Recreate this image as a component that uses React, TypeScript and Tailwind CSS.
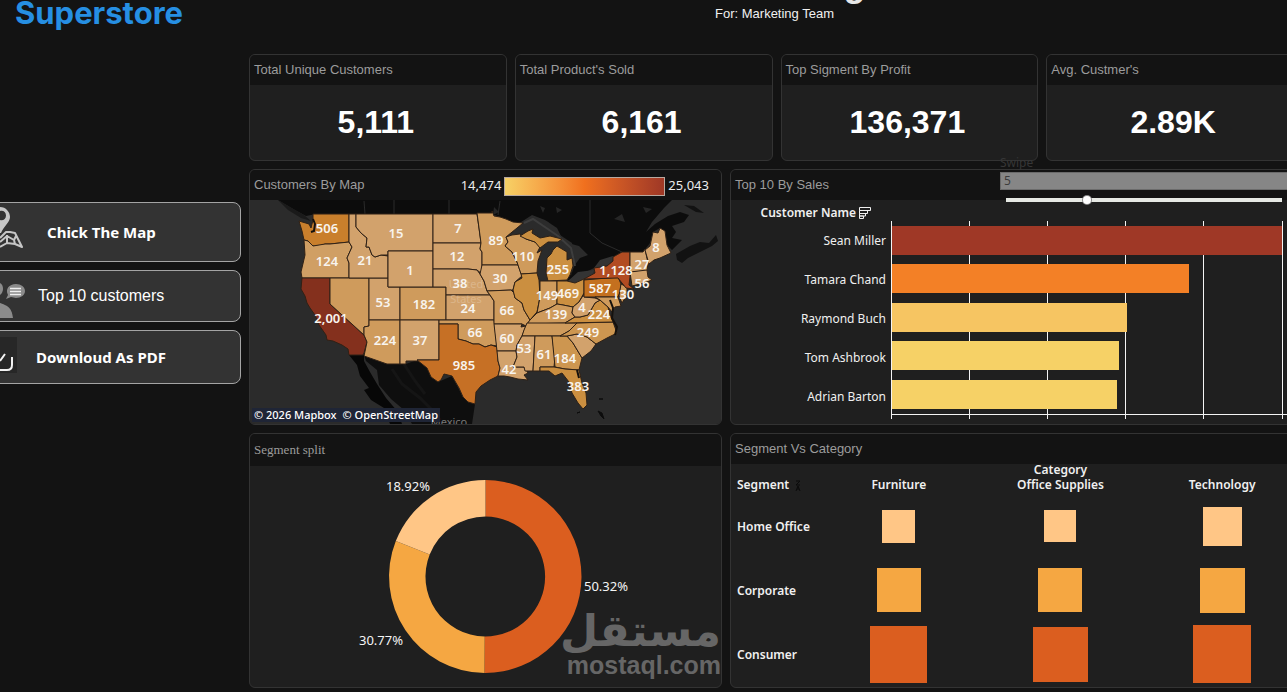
import type { ReactNode } from 'react';
import { useState } from 'react';

const SANS = "font-['Liberation_Sans',Arial,sans-serif]";

interface Kpi {
  label: string;
  value: string;
}

const KPIS: Kpi[] = [
  { label: 'Total Unique Customers', value: '5,111' },
  { label: "Total Product's Sold", value: '6,161' },
  { label: 'Top Sigment By Profit', value: '136,371' },
  { label: "Avg. Custmer's", value: '2.89K' },
];

const TOP_SALES = [
  { name: 'Sean Miller', width: 391, fill: '#9f3826' },
  { name: 'Tamara Chand', width: 298, fill: '#f38026' },
  { name: 'Raymond Buch', width: 236, fill: '#f6c562' },
  { name: 'Tom Ashbrook', width: 228, fill: '#f6d166' },
  { name: 'Adrian Barton', width: 226, fill: '#f6d166' },
];

const CATEGORIES = ['Furniture', 'Office Supplies', 'Technology'];

const SEGMENTS = [
  { name: 'Home Office', color: '#ffc686', sizes: [33, 32, 39] },
  { name: 'Corporate', color: '#f5a742', sizes: [44, 44, 45] },
  { name: 'Consumer', color: '#db5e1f', sizes: [57, 55, 58] },
];

const TAN = '#d2a26c';
const SAND = '#cf9b5c';
const GOLD = '#cb8f40';

/** State outlines: path + fill. */
const STATES: [string, string][] = [
  // west
  ['M313 214L349 214L349 242L330 244L325 244L320 246L313 246L308 241L304 240L302 231L299 221L309 224L311 228L313 220Z', '#c97f2c'],
  ['M304 240L308 241L313 246L325 244L330 244L349 242L352 247L347 258L349 263L349 278L302 278L301 272L305 255Z', '#d09f64'],
  ['M302 278L330 278L330 304L364 335L367 342L364 353L363 355L349 355L348 349L342 345L333 341L327 340L326 335L319 325L315 315L310 308L307 303L305 296L301 289Z', '#84301d'],
  ['M330 278L369 278L369 326L364 327L364 335L330 304Z', SAND],
  ['M369 278L388 278L388 287L400 287L400 320L369 320Z', TAN],
  ['M400 287L446 287L446 320L400 320Z', SAND],
  ['M369 320L400 320L400 364L387 364L364 356L367 342L364 335L364 327L369 326Z', SAND],
  ['M400 320L439 320L439 360L417 360L418 361L406 361L406 364L400 364Z', TAN],
  ['M349 214L356 214L356 227L361 233L367 238L366 247L369 247L372 255L375 257L381 255L388 256L388 278L349 278L349 263L347 258L352 247L349 242Z', TAN],
  ['M356 214L433 214L433 251L388 251L388 255L381 255L375 257L372 255L369 247L366 247L367 238L361 233L356 227Z', TAN],
  ['M388 251L433 251L433 287L388 287Z', TAN],
  // plains
  ['M433 214L477 214L479 228L481 243L433 243Z', TAN],
  ['M433 243L481 243L480 249L482 252L482 274L477 270L468 269L433 269Z', TAN],
  ['M433 269L468 269L477 270L480 274L484 281L487 291L490 295L446 295L446 287L433 287Z', TAN],
  ['M446 295L490 295L494 301L494 320L446 320Z', TAN],
  ['M439 320L494 320L497 346L491 345L485 347L479 344L473 344L466 341L458 339L458 324L439 324Z', SAND],
  ['M439 324L458 324L458 339L466 341L473 344L479 344L485 347L491 345L497 347L498 361L500 368L498 376L490 380L481 386L476 392L475 404L468 402L463 397L459 388L452 376L444 374L441 380L438 382L431 377L427 368L417 360L439 360Z', '#c67025'],
  ['M477 213L492 213L492 211L494 216L500 217L506 219L513 222L523 223L517 228L506 237L508 242L505 246L512 252L517 262L518 265L482 265L482 252L480 249L481 243Z', SAND],
  ['M482 265L518 265L522 276L515 282L513 290L487 291L484 281L480 274Z', TAN],
  ['M487 291L511 290L514 293L515 298L522 303L524 310L530 320L526 326L522 324L494 324L494 301L490 295Z', SAND],
  ['M494 324L522 324L521 327L526 326L522 336L517 345L516 351L497 351Z', TAN],
  ['M497 351L516 351L517 357L513 367L524 367L528 373L524 375L528 380L518 379L510 377L504 376L498 376L500 368L498 361Z', TAN],
  // great lakes
  ['M506 237L512 235L520 234L526 239L535 242L540 247L537 253L542 250L538 261L537 273L521 274L517 262L512 252L505 246L508 242Z', SAND],
  ['M520 236L528 231L533 229L532 233L540 238L550 236L562 239L558 242L548 242L540 248L535 242L526 239Z', GOLD],
  ['M557 246L562 249L567 252L567 260L572 258L573 266L570 275L567 280L548 281L546 273L547 258L551 254L553 250Z', GOLD],
  ['M521 274L537 273L539 280L540 297L537 312L530 320L524 310L522 303L515 298L513 290L515 282L522 278Z', GOLD],
  ['M540 281L557 281L557 304L550 308L537 313L540 297Z', SAND],
  ['M557 281L567 281L575 283L584 279L584 293L579 302L573 307L563 305L557 304Z', GOLD],
  // south
  ['M537 313L550 308L557 304L563 305L573 307L572 313L575 317L565 323L527 324L530 320Z', SAND],
  ['M527 323L577 323L569 331L560 336L522 336L524 330Z', SAND],
  ['M522 336L535 336L533 371L525 371L524 367L513 367L517 357L516 351L517 345Z', TAN],
  ['M535 336L552 336L555 357L554 367L540 367L540 371L533 371Z', SAND],
  ['M552 336L567 336L573 343L582 358L579 370L565 369L555 367Z', '#cd9650'],
  ['M540 367L554 367L565 369L579 370L582 383L586 393L587 405L583 409L578 403L572 393L569 382L562 373L555 376L549 371L540 371Z', GOLD],
  ['M567 336L577 334L587 337L596 344L591 351L582 358L573 343Z', TAN],
  ['M577 323L613 322L617 333L607 338L596 344L587 337L577 334L567 336L560 336L569 331Z', '#cd9650'],
  ['M565 323L575 317L580 317L588 315L595 303L600 300L608 307L610 315L613 322Z', GOLD],
  ['M573 307L579 302L584 294L584 297L595 298L600 300L595 303L588 315L580 317L575 317L572 313Z', TAN],
  // north east
  ['M584 280L618 277L621 284L620 292L618 297L584 297Z', '#c4701f'],
  ['M595 297L618 297L621 306L615 307L612 312L608 307L600 300Z', SAND],
  ['M621 284L627 287L627 295L622 303L619 296Z', SAND],
  ['M584 279L595 273L594 268L607 266L613 261L613 257L622 252L630 252L630 277L629 285L634 289L626 288L618 278Z', '#b24c22'],
  ['M630 252L643 252L645 249L648 263L647 271L630 272Z', TAN],
  ['M630 272L647 270L648 277L652 280L644 283L632 286Z', TAN],
  ['M645 250L650 246L653 232L658 233L660 228L665 231L667 245L671 253L660 258L654 260L649 264Z', TAN],
];

const MAP_LABELS: [number, number, string][] = [
  [327, 229, '506'], [396, 234, '15'], [458, 229, '7'], [496, 241, '89'], [327, 262, '124'],
  [365, 261, '21'], [410, 271, '1'], [457, 257, '12'], [523, 257, '110'], [460, 284, '38'],
  [500, 279, '30'], [558, 270, '255'], [616, 271, '1,128'], [642, 265, '27'], [656, 248, '8'],
  [642, 284, '56'], [600, 289, '587'], [568, 294, '469'], [547, 296, '149'], [623, 295, '130'],
  [383, 303, '53'], [424, 305, '182'], [468, 309, '24'], [507, 311, '66'], [582, 308, '4'],
  [556, 315, '139'], [599, 315, '224'], [331, 319, '2,001'], [385, 341, '224'], [420, 341, '37'],
  [475, 333, '66'], [507, 339, '60'], [588, 333, '249'], [524, 349, '53'], [544, 355, '61'],
  [565, 359, '184'], [464, 366, '985'], [509, 370, '42'], [578, 387, '383'],
];

interface PanelProps {
  title: string;
  serif?: boolean;
  headerClass?: string;
  extra?: ReactNode;
  children: ReactNode;
}

function Panel({ title, serif, headerClass = 'h-[30px]', extra, children }: PanelProps) {
  return (
    <section className="relative flex min-w-0 flex-col overflow-hidden rounded-md border border-[#333333] bg-[#1f1f1f]">
      <header className={`flex shrink-0 items-center justify-between bg-[#131313] px-1 ${headerClass}`}>
        <h2
          className={`whitespace-nowrap text-[13px] text-[#9c9c9c] ${
            serif ? "font-['Liberation_Serif',serif]" : SANS
          }`}
        >
          {title}
        </h2>
        {extra}
      </header>
      {children}
    </section>
  );
}

function MapPinIcon() {
  return (
    <svg width="24" height="50" viewBox="0 0 24 50" className="shrink-0" aria-hidden="true">
      <path fillRule="evenodd" d="M0 0C6 0 10 5 10 10C10 15 4 19 1 26L0 26ZM0 4C3 3 6 5 6 8.500C6 12 3 14 0 13Z" fill="#c6c6c6" />
      <path d="M0 31L6 25H10L15 26L18 32L22 40L15 37L7 36L0 40M7 28V36M7 29L14 33L16 29M14 33L15 37M0 35L7 29" fill="none" stroke="#c6c6c6" strokeWidth="2" strokeLinejoin="round" />
    </svg>
  );
}

function CustomerIcon() {
  return (
    <svg width="25" height="44" viewBox="0 0 25 44" className="shrink-0" aria-hidden="true">
      <path d="M0 9C4 11 4 18 0 21Z" fill="#8b8b8b" />
      <path d="M0 29C5 31 12 32 13 44L0 44Z" fill="#8b8b8b" />
      <path d="M16 10C21 10 25 13 25 17C25 21 21 24 16 24L11 23L6 25L8 21C5 15 9 10 16 10Z" fill="#8b8b8b" />
      <path d="M10 14.500H21M10 17.500H21M10 20.500H21" stroke="#efefef" strokeWidth="1.500" />
    </svg>
  );
}

function DownloadIcon() {
  return (
    <svg width="17" height="36" viewBox="0 0 17 36" className="mt-1.5 shrink-0 self-start" aria-hidden="true">
      <rect width="17" height="36" fill="#272727" />
      <path d="M0 24L5 17M0 33H7Q12 33 12 28V20" fill="none" stroke="#f2f2f2" strokeWidth="2" />
    </svg>
  );
}

function Sidebar() {
  const item = '-ml-2 flex items-center rounded-lg border border-[#a4a4a4] bg-[#333333] pl-[7px] text-white';
  return (
    <nav className="flex w-[241px] shrink-0 flex-col gap-2">
      <a
        href="#top"
        className="-mt-3 mb-[164px] block h-[50px] pl-[15px] font-['Inter',sans-serif] text-[31px] font-bold leading-[50px] text-[#268fe3]"
      >
        Superstore
      </a>
      <button type="button" className={`${item} h-[60px] -mt-2 gap-[23px] font-['Noto_Sans','Open_Sans',sans-serif] text-[15px] font-bold`}>
        <MapPinIcon />
        Chick The Map
      </button>
      <button type="button" className={`${item} h-[52px] gap-[13px] ${SANS} text-base`}>
        <CustomerIcon />
        Top 10 customers
      </button>
      <button type="button" className={`${item} h-[54px] gap-[19px] font-['Noto_Sans','Open_Sans',sans-serif] text-[15px] font-bold`}>
        <DownloadIcon />
        Downloud As PDF
      </button>
    </nav>
  );
}

function KpiCard({ label, value }: Kpi) {
  return (
    <Panel title={label}>
      <p className={`flex h-[75px] items-center justify-center pr-1 pb-0.5 ${SANS} text-[32px] font-bold text-white`}>
        {value}
      </p>
    </Panel>
  );
}

function CustomerMap() {
  const legend = (
    <div className="flex items-center gap-[3px] pr-2 pt-0.5 text-[13px] text-[#ececec]">
      <span>14,474</span>
      <div className="h-[19px] w-[161px] border border-[#b8a9a0] bg-linear-to-r from-[#f6d166] via-[#f0701e] to-[#9f3826]" />
      <span>25,043</span>
    </div>
  );

  return (
    <Panel title="Customers By Map" extra={legend}>
      <svg viewBox="250 200 471 224" className="block w-full bg-[#2b2b2b]" role="img" aria-label="Customers by state">
        {/* Canada */}
        <path d="M278 200L672 200L664 208L652 222L646 232L655 224L668 216L680 212L689 215L684 222L672 226L676 232L672 238L682 240L672 250L667 245L665 231L660 228L653 232L650 243L643 252L622 252L613 257L600 262L594 268L580 275L567 281L576 262L572 243L560 235L548 222L532 216L520 226L500 217L492 214L316 214L306 216L295 210Z" fill="#0c0c0c" />
        <path d="M676 254L690 246L700 242L709 243L716 235L718 241L712 246L700 252L688 258L682 263L677 260Z" fill="#121212" />
        <path d="M684 205L694 206L704 213L696 212Z" fill="#121212" />
        <path d="M278 200L290 207L304 215L311 221L301 218L288 210Z" fill="#1a1a1a" />
        <path d="M364 201L365 214M394 200V214M449 200V214M590 200V233L602 243L622 252M500 201L498 215" fill="none" stroke="#2b2b2b" strokeWidth="1" />
        <path d="M540 206l5 2l-2 5zM614 219l8-5l3 8zM556 207l6 3l-5 3zM643 207l9 2l-6 4zM494 207l5 5l-6 3z" fill="#262626" />
        {/* Lakes */}
        <path d="M508 235L518 224L532 215L545 220L557 228L562 238L548 236L541 238L532 228L520 235Z" fill="#2b2b2b" />
        <path d="M538 262L541 252L548 244L556 243L549 250L546 262L547 274L543 281L538 278Z" fill="#2b2b2b" />
        <path d="M560 242L568 243L579 246L588 255L580 258L574 266L571 276L573 262L567 258L567 251Z" fill="#2b2b2b" />
        <path d="M568 281L578 272L594 270L592 276L580 282L570 284ZM594 268L600 260L613 256L612 262L604 267Z" fill="#343434" />
        <path d="M524 223L533 219L558 236L571 248L575 266" fill="none" stroke="#3d3d3d" strokeWidth="2" />
        {/* Mexico */}
        <path d="M349 355L364 355L364 361L370 372L377 384L386 398L398 412L402 424L390 424L384 408L371 400L364 390L369 388L360 376L357 365Z" fill="#070707" />
        <path d="M364 355L387 364L406 364L417 360L427 368L438 382L452 376L463 397L475 404L472 424L412 424L404 410L391 399L379 385L377 370L366 361Z" fill="#0e0e0e" />
        <path d="M392 369L402 384L420 398L436 414M404 364L415 381L425 394" fill="none" stroke="#151515" strokeWidth="3" />
        <path d="M598 411l4 2l2 6l-3-3zM577 413l3-1zM599 399l4 0z" fill="#0c0c0c" stroke="#0c0c0c" />

        <g stroke="#2f2116" strokeWidth="1" strokeLinejoin="round">
          {STATES.map(([d, fill]) => (
            <path key={d} d={d} fill={fill} />
          ))}
        </g>
        <path d="M313 219l2 5l-1 7l-3 1M610 300l3 8l-1 10l5 9l-2 8M577 370l2 8" fill="none" stroke="#15110d" strokeWidth="2" />

        <g className="font-['Noto_Sans','Open_Sans',sans-serif]" textAnchor="middle">
          <g fontSize="11" fill="#e2c29e">
            <text x="466" y="288" opacity="0.6">United</text>
            <text x="466" y="303" opacity="0.6">States</text>
          </g>
          <text x="449" y="426" fontSize="11" fill="#777777">Mexico</text>
          <g fontSize="13" fontWeight="600" fill="#f8f4ee">
            {MAP_LABELS.map(([x, y, label]) => (
              <text key={`${x}-${y}`} x={x} y={y + 4}>
                {label}
              </text>
            ))}
          </g>
        </g>
      </svg>
      <div className="absolute bottom-0.5 left-0.5 flex gap-1.5 bg-[#1f2536] px-0.5 text-[11px] font-medium leading-[14px] text-white">
        <a href="#mapbox">© 2026 Mapbox</a>
        <a href="#osm">© OpenStreetMap</a>
      </div>
    </Panel>
  );
}

function TopSales() {
  const [top, setTop] = useState(5);
  const ticks = [0, 1, 2, 3, 4, 5];

  return (
    <div className="relative flex">
      <div className="grid flex-1">
        <Panel title="Top 10 By Sales">
          <div className="flex flex-1">
            <div className="flex w-40 shrink-0 flex-col pr-[5px] pb-2 text-right text-[12px] text-[#f0f0f0]">
              <div className="flex h-[22px] items-center justify-end gap-[3px] pr-[15px] pt-1 font-semibold">
                <span>Customer Name</span>
                <svg width="12" height="12" viewBox="0 0 12 12" fill="none" stroke="#f0f0f0" aria-hidden="true">
                  <path d="M.5 .5H11.5V3.5H.5ZM.5 3.5H8.5V6.5H.5ZM.5 6.5H6.5V9H.5ZM.5 9H4.5V11.5H.5Z" />
                </svg>
              </div>
              {TOP_SALES.map((row) => (
                <span key={row.name} className="flex flex-1 items-center justify-end whitespace-nowrap">
                  {row.name}
                </span>
              ))}
            </div>
            <svg viewBox="0 0 412 224" className="block min-w-0 flex-1" role="img" aria-label="Sales by customer">
              {ticks.map((t) => (
                <rect key={t} x={Math.floor(t * 78.2)} y="21" width="1" height="198" fill="#f4f4f4" />
              ))}
              <rect x="0" y="214" width="412" height="1" fill="#f4f4f4" />
              {TOP_SALES.map((row, i) => (
                <rect key={row.name} x="1" y={Math.floor(26 + i * 38.5)} width={row.width - 1} height="29" fill={row.fill} />
              ))}
            </svg>
          </div>
        </Panel>
      </div>
      {/* Floating parameter control */}
      <div className="absolute -top-4 right-0 left-[270px] text-[12px]">
        <label htmlFor="swipe" className="block h-[19px] pt-0.5 leading-4 text-[#363636]">
          Swipe
        </label>
        <input
          type="text"
          aria-label="Swipe value"
          value={top}
          onChange={(e) => setTop(Number(e.target.value) || 1)}
          className="block h-[18px] w-full border border-[#6b6b6b] bg-[#868686] px-[3px] text-[12px] text-[#3c3c3c]"
        />
        <input
          id="swipe"
          type="range"
          min={1}
          max={15}
          value={top}
          onChange={(e) => setTop(Number(e.target.value))}
          className="ml-1.5 mt-[5px] block h-2.5 w-[276px] appearance-none bg-transparent [&::-webkit-slider-runnable-track]:h-1 [&::-webkit-slider-runnable-track]:bg-[#e6e9e4] [&::-webkit-slider-thumb]:-mt-0.5 [&::-webkit-slider-thumb]:size-2 [&::-webkit-slider-thumb]:appearance-none [&::-webkit-slider-thumb]:rounded-full [&::-webkit-slider-thumb]:bg-white [&::-webkit-slider-thumb]:ring-1 [&::-webkit-slider-thumb]:ring-[#8a8a8a]"
        />
      </div>
    </div>
  );
}

function SegmentSplit() {
  return (
    <Panel title="Segment split" serif headerClass="h-8">
      <svg viewBox="250 466 471 221" className="block w-full" role="img" aria-label="Segment split">
        <path d="M485.500 480A96.500 96.500 0 1 1 484.500 673L484.700 636.500A60 60 0 1 0 485.500 516.500Z" fill="#db5e1f" />
        <path d="M484.500 673A96.500 96.500 0 0 1 395.800 541L429.700 554.400A60 60 0 0 0 484.700 636.500Z" fill="#f5a742" />
        <path d="M395.800 541A96.500 96.500 0 0 1 485.500 480L485.500 516.500A60 60 0 0 0 429.700 554.400Z" fill="#ffc686" />
        <g fontSize="13" fill="#f5f5f5" textAnchor="middle" className="font-['Noto_Sans','Open_Sans',sans-serif]">
          <text x="408" y="491">18.92%</text>
          <text x="606" y="591">50.32%</text>
          <text x="381" y="645">30.77%</text>
        </g>
      </svg>
      {/* Brand watermark */}
      <div className="absolute right-0 bottom-2.5 flex flex-col items-end text-[#666666]">
        <span dir="rtl" lang="ar" className="font-['DejaVu_Sans',sans-serif] text-[44px] font-bold leading-[44px]">
          مستقل
        </span>
        <span className={`${SANS} text-[25px] font-bold leading-6`}>mostaql.com</span>
      </div>
    </Panel>
  );
}

function SegmentCategory() {
  return (
    <Panel title="Segment Vs Category">
      <table className="w-full table-fixed text-[12px] font-semibold text-[#f0f0f0]">
        <thead className="align-top">
          <tr className="h-3 leading-3">
            <th className="w-[87px]" />
            <th colSpan={3} className="font-semibold">Category</th>
          </tr>
          <tr className="h-[18px] leading-[17px]">
            <th className="whitespace-nowrap pl-1.5 text-left font-semibold">
              Segment
              <svg width="6" height="12" viewBox="0 0 6 12" className="ml-1.5 inline" fill="none" stroke="#0a0a0a" aria-hidden="true">
                <path d="M1 1H5L1 5H5M1 11L3 6L5 11M2 9H4" />
              </svg>
            </th>
            {CATEGORIES.map((c) => (
              <th key={c} className="font-semibold">{c}</th>
            ))}
          </tr>
        </thead>
        <tbody>
          {SEGMENTS.map((s) => (
            <tr key={s.name} className="h-16">
              <th scope="row" className="whitespace-nowrap pt-0.5 pl-1.5 text-left font-semibold">
                {s.name}
              </th>
              {s.sizes.map((size, i) => (
                <td key={CATEGORIES[i]}>
                  <div className="mx-auto" style={{ width: size, height: size, backgroundColor: s.color }} />
                </td>
              ))}
            </tr>
          ))}
        </tbody>
      </table>
    </Panel>
  );
}

export default function App() {
  return (
    <div className="flex min-h-screen w-full gap-2 overflow-hidden bg-[#131313] font-['Noto_Sans','Open_Sans',sans-serif]">
      <Sidebar />
      <main className="-mr-[17px] flex min-w-0 flex-1 flex-col gap-2">
        <header className={`-mt-9 flex h-[82px] flex-col items-center pr-1 ${SANS}`}>
          <h1 className="h-[42px] pl-3 text-4xl font-bold leading-10 text-[#e8e8e8]">Marketing</h1>
          <p className="text-[13px] leading-4 text-[#f0f0f0]">For: Marketing Team</p>
        </header>
        <div className="grid grid-cols-4 gap-2">
          {KPIS.map((kpi) => (
            <KpiCard key={kpi.label} {...kpi} />
          ))}
        </div>
        <div className="grid grid-cols-[473fr_574fr] gap-2">
          <CustomerMap />
          <TopSales />
        </div>
        <div className="grid grid-cols-[473fr_574fr] gap-2">
          <SegmentSplit />
          <SegmentCategory />
        </div>
      </main>
    </div>
  );
}
